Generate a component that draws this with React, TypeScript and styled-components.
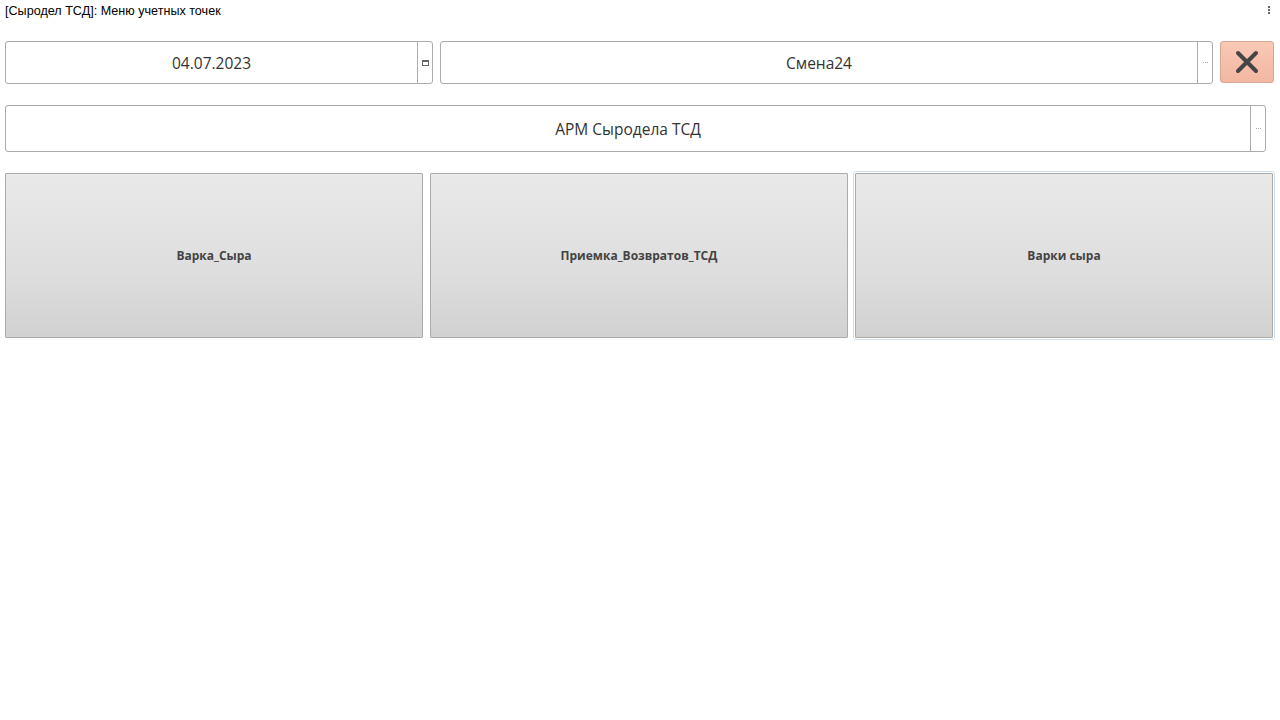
import styled, { createGlobalStyle } from "styled-components";

const GlobalStyle = createGlobalStyle`
  html, body {
    margin: 0;
    padding: 0;
    background: #ffffff;
  }
  body {
    font-family: "Open Sans", "Noto Sans", sans-serif;
  }
`;

const Page = styled.div`
  box-sizing: border-box;
  width: 1280px;
  height: 720px;
  display: flex;
  flex-direction: column;
  padding: 0 5px;
  background: #fff;
`;

const TitleBar = styled.div`
  display: flex;
  align-items: center;
  height: 22px;
  font-family: "Liberation Sans", Arial, sans-serif;
  font-size: 12.6px;
  color: #000;
`;

const TitleText = styled.span`
  flex: 1;
`;

const Kebab = styled.div`
  display: flex;
  flex-direction: column;
  gap: 1px;
  margin-right: 5px;
  margin-top: -2px;

  span {
    width: 2px;
    height: 2px;
    background: #666;
  }
`;

const Row = styled.div<{ $top: number; $height: number }>`
  display: flex;
  gap: 7px;
  margin-top: ${({ $top }) => $top}px;
  height: ${({ $height }) => $height}px;
`;

const Field = styled.div<{ $width: number }>`
  box-sizing: border-box;
  width: ${({ $width }) => $width}px;
  height: 100%;
  display: flex;
  border: 1px solid #ababab;
  border-radius: 3px;
  background: #fff;
`;

const FieldValue = styled.div`
  flex: 1;
  display: flex;
  align-items: center;
  justify-content: center;
  font-size: 15.5px;
  color: #333;
`;

const FieldButton = styled.div`
  width: 14px;
  display: flex;
  align-items: center;
  justify-content: center;
  gap: 1px;
  border-left: 1px solid #ababab;
`;

const Dot = styled.span`
  width: 1px;
  height: 1px;
  background: #aaa;
`;

const CloseButton = styled.div`
  box-sizing: border-box;
  width: 54px;
  height: 42px;
  display: flex;
  align-items: center;
  justify-content: center;
  border: 1px solid #d7a796;
  border-radius: 3px;
  background: linear-gradient(#f8c9b6, #f3b7a2);
`;

const Tiles = styled.div`
  display: flex;
  gap: 7px;
  margin-top: 21px;
  height: 165px;
`;

const Tile = styled.div<{ $focused?: boolean }>`
  box-sizing: border-box;
  width: 418px;
  height: 165px;
  display: flex;
  align-items: center;
  justify-content: center;
  border: 1px solid #ababab;
  border-radius: 1px;
  background: linear-gradient(#e9e9e9, #dedede 60%, #d1d1d1);
  font-size: 12px;
  font-weight: 700;
  color: #444;
  ${({ $focused }) =>
    $focused &&
    `
    outline: 1px solid #cfe0ee;
    outline-offset: 1px;
  `}
`;

const Ellipsis = () => (
  <>
    <Dot />
    <Dot />
    <Dot />
  </>
);

const CalendarIcon = () => (
  <svg width="7" height="6" viewBox="0 0 7 6">
    <rect x="0.5" y="0.5" width="6" height="5" fill="none" stroke="#666" />
    <rect x="0.5" y="0.5" width="6" height="1.5" fill="#666" />
  </svg>
);

const CloseIcon = () => (
  <svg width="24" height="24" viewBox="0 0 24 24">
    <path
      d="M3 3 L21 21 M21 3 L3 21"
      stroke="#454545"
      strokeWidth="4"
      strokeLinecap="round"
      fill="none"
    />
  </svg>
);

export default function App() {
  return (
    <>
      <GlobalStyle />
      <Page>
        <TitleBar>
          <TitleText>[Сыродел ТСД]: Меню учетных точек</TitleText>
          <Kebab>
            <span />
            <span />
            <span />
          </Kebab>
        </TitleBar>
        <Row $top={19} $height={43}>
          <Field $width={428}>
            <FieldValue>04.07.2023</FieldValue>
            <FieldButton>
              <CalendarIcon />
            </FieldButton>
          </Field>
          <Field $width={773}>
            <FieldValue>Смена24</FieldValue>
            <FieldButton>
              <Ellipsis />
            </FieldButton>
          </Field>
          <CloseButton>
            <CloseIcon />
          </CloseButton>
        </Row>
        <Row $top={21} $height={47}>
          <Field $width={1261}>
            <FieldValue>АРМ Сыродела ТСД</FieldValue>
            <FieldButton>
              <Ellipsis />
            </FieldButton>
          </Field>
        </Row>
        <Tiles>
          <Tile>Варка_Сыра</Tile>
          <Tile>Приемка_Возвратов_ТСД</Tile>
          <Tile $focused>Варки сыра</Tile>
        </Tiles>
      </Page>
    </>
  );
}
